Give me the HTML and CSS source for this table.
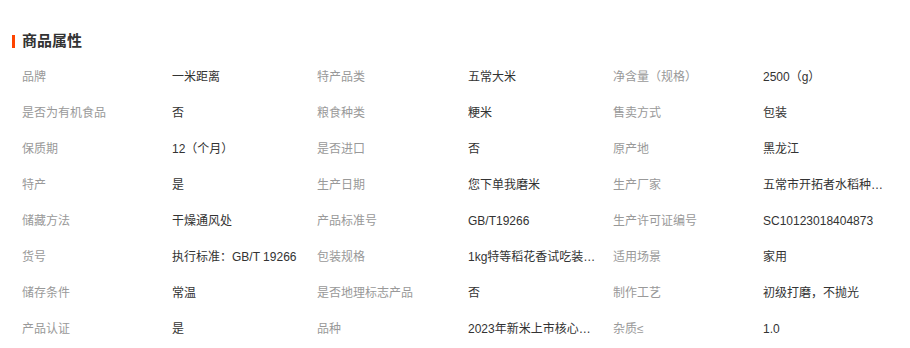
FILE: index.html
```html
<!DOCTYPE html>
<html lang="zh-CN">
<head>
<meta charset="utf-8">
<title>商品属性</title>
<link rel="stylesheet" href="styles.css">
</head>
<body>
<section class="attrs">
  <h2 class="attrs-title">商品属性</h2>
  <div class="attrs-grid">
    <div class="lbl">品牌</div><div class="val">一米距离</div>
    <div class="lbl">特产品类</div><div class="val">五常大米</div>
    <div class="lbl">净含量（规格）</div><div class="val">2500（g）</div>

    <div class="lbl">是否为有机食品</div><div class="val">否</div>
    <div class="lbl">粮食种类</div><div class="val">粳米</div>
    <div class="lbl">售卖方式</div><div class="val">包装</div>

    <div class="lbl">保质期</div><div class="val">12（个月）</div>
    <div class="lbl">是否进口</div><div class="val">否</div>
    <div class="lbl">原产地</div><div class="val">黑龙江</div>

    <div class="lbl">特产</div><div class="val">是</div>
    <div class="lbl">生产日期</div><div class="val">您下单我磨米</div>
    <div class="lbl">生产厂家</div><div class="val">五常市开拓者水稻种植专业合作社</div>

    <div class="lbl">储藏方法</div><div class="val">干燥通风处</div>
    <div class="lbl">产品标准号</div><div class="val">GB/T19266</div>
    <div class="lbl">生产许可证编号</div><div class="val">SC10123018404873</div>

    <div class="lbl">货号</div><div class="val">执行标准：GB/T 19266</div>
    <div class="lbl">包装规格</div><div class="val">1kg特等稻花香试吃装体验装</div>
    <div class="lbl">适用场景</div><div class="val">家用</div>

    <div class="lbl">储存条件</div><div class="val">常温</div>
    <div class="lbl">是否地理标志产品</div><div class="val">否</div>
    <div class="lbl">制作工艺</div><div class="val">初级打磨，不抛光</div>

    <div class="lbl">产品认证</div><div class="val">是</div>
    <div class="lbl">品种</div><div class="val">2023年新米上市核心产区稻花香</div>
    <div class="lbl">杂质≤</div><div class="val">1.0</div>
  </div>
</section>
</body>
</html>
```

FILE: styles.css
```css
html, body {
  margin: 0;
  padding: 0;
  background: #fff;
}
body {
  font-family: "Liberation Sans", "Noto Sans CJK SC", sans-serif;
  font-size: 12px;
  color: #333;
}
.attrs {
  padding: 31px 0 0 12px;
}
.attrs-title {
  margin: 0;
  height: 20px;
  line-height: 20px;
  font-size: 15px;
  font-weight: bold;
  color: #333;
  display: flex;
  align-items: center;
  gap: 7px;
}
.attrs-title::before {
  content: "";
  width: 3px;
  height: 13px;
  background: #ff4400;
}
.attrs-grid {
  margin-top: 8px;
  padding-left: 10px;
  display: grid;
  grid-template-columns: 150px 145px 151px 145px 150px 140px;
  grid-auto-rows: 36px;
  align-items: center;
}
.lbl {
  color: #999;
  white-space: nowrap;
  line-height: 18px;
}
.val {
  color: #333;
  white-space: nowrap;
  overflow: hidden;
  text-overflow: ellipsis;
  padding-right: 12px;
  line-height: 18px;
}
```
